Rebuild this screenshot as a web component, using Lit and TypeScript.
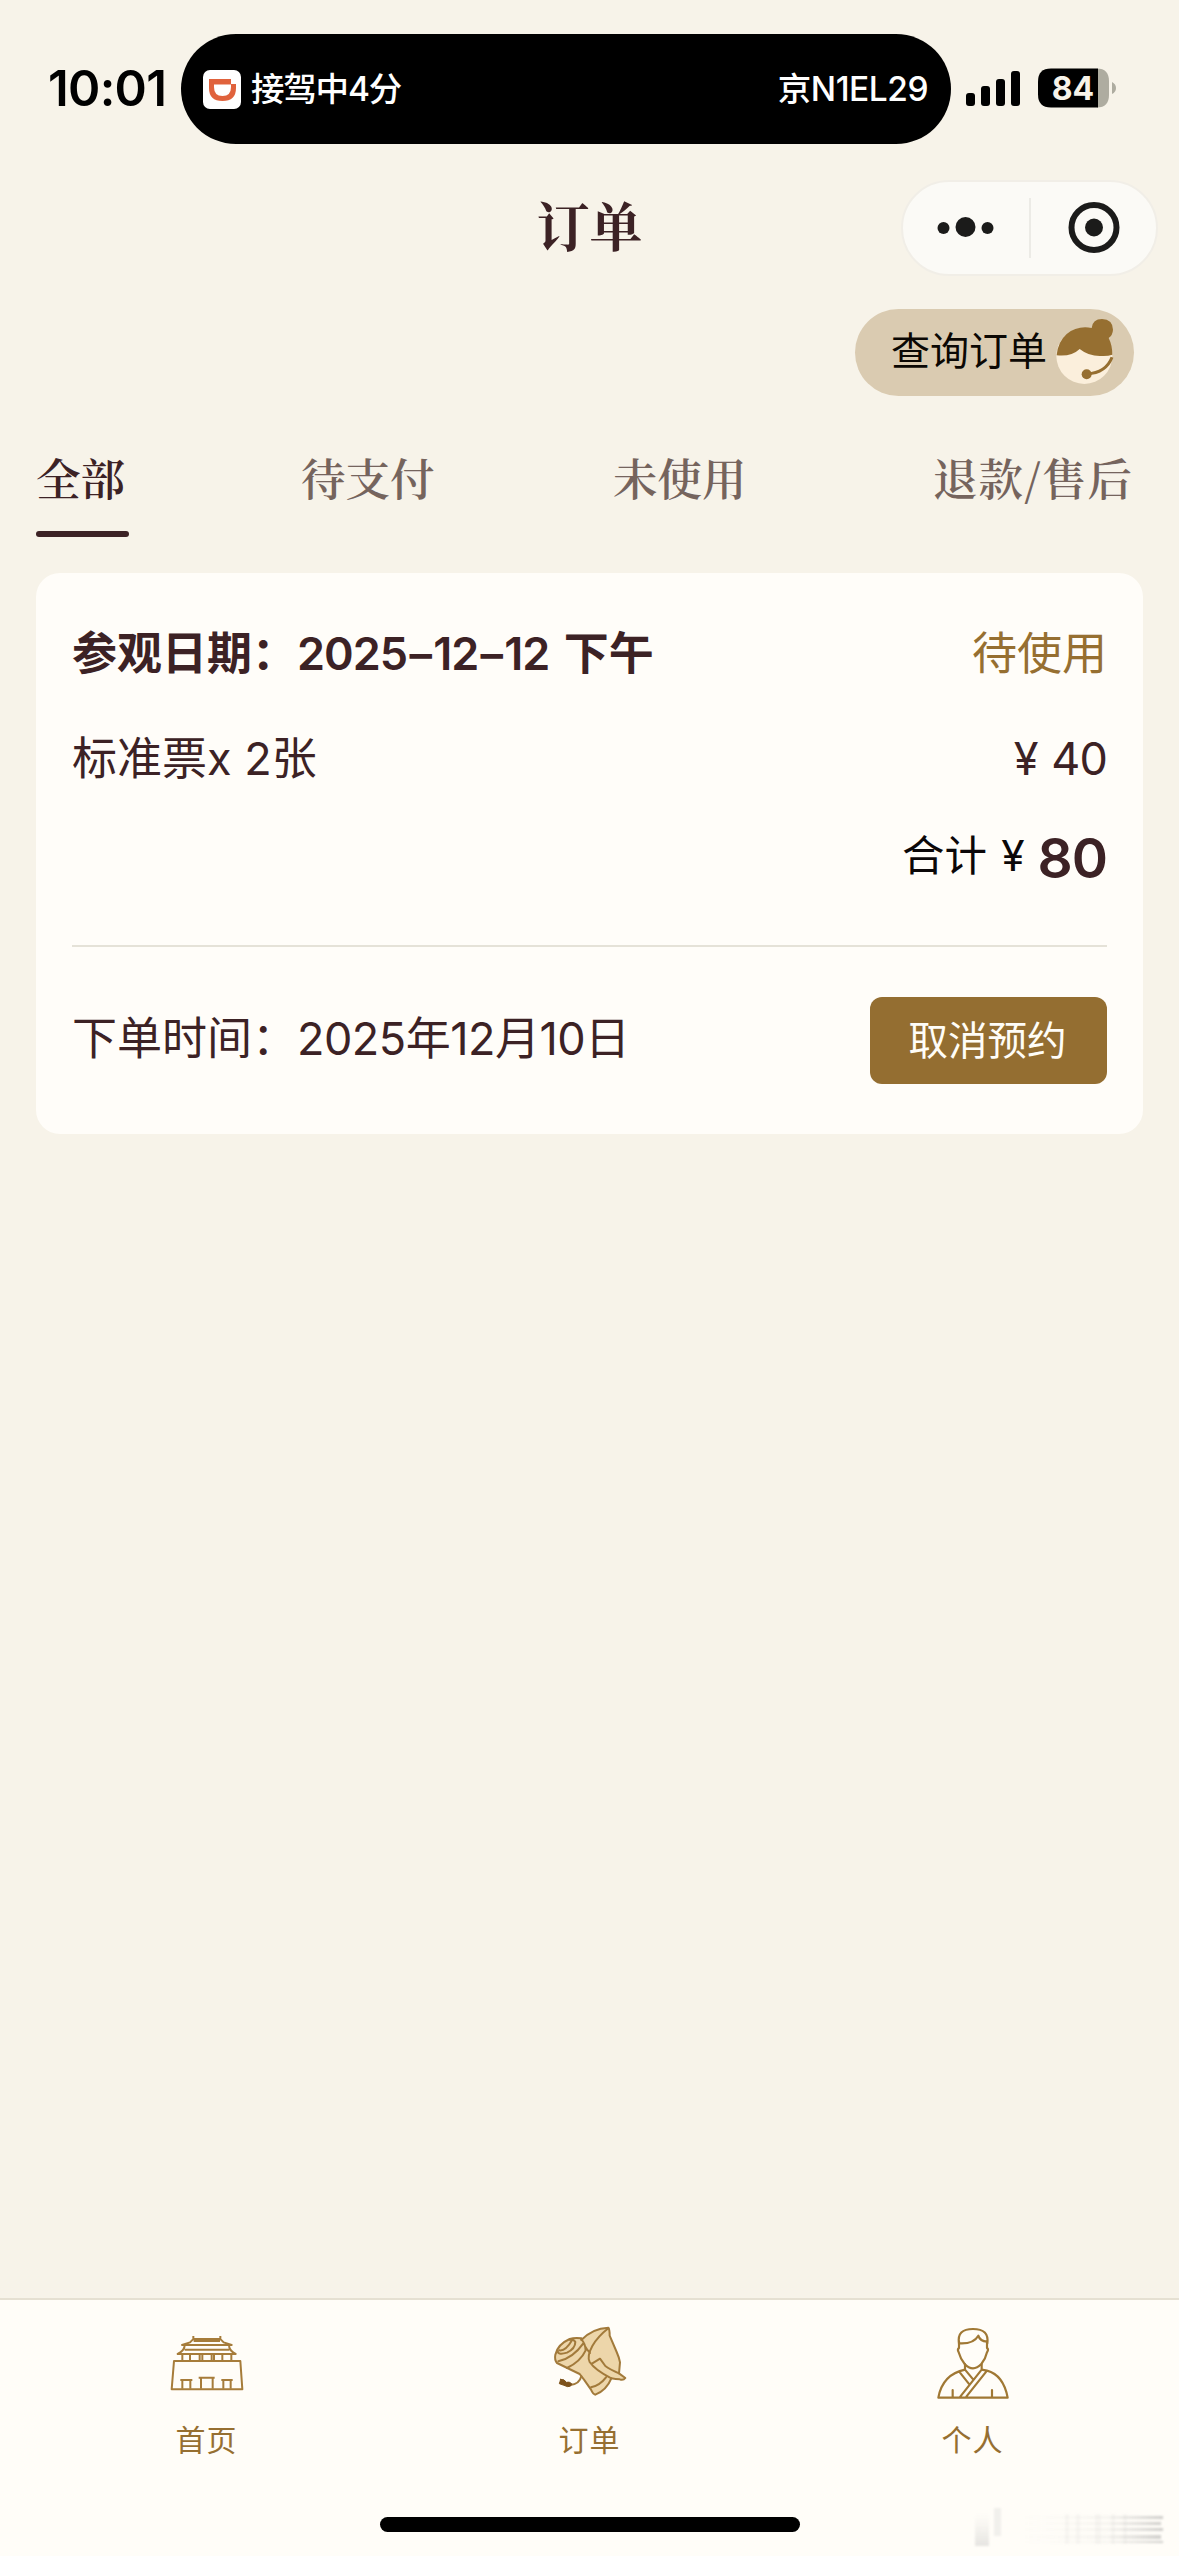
import { LitElement, html, css, svg } from "lit";
import { customElement } from "lit/decorators.js";

const homeIcon = svg`
  <svg class="tab-icon" viewBox="59 105 225 225" fill="none" stroke="#a67c3a" stroke-width="6" stroke-linejoin="round">
    <path d="M132 138v9h81v-9M134 145L122 157 98 165H247L223 157 211 145M133 153H212"/>
    <path d="M106 168q-2 14-21 24H259q-18-9-20-24M106 179H240"/>
    <path d="M99 194v18M122 194v18M151 194v18M159 194v18M187 194v18M194 194v18M219 194v18M246 194v18"/>
    <path d="M74 213H273L279 298H67Z"/>
    <path d="M93 270H129M99 270v26M123 270v26M148 263H196M155 263v33M190 263v33M216 270H250M222 270v26M244 270v26"/>
  </svg>`;

const orderIcon = svg`
  <svg class="tab-icon" viewBox="67 105 225 225" fill="#edd6aa" stroke="#a27a3b" stroke-width="6" stroke-linejoin="round" stroke-linecap="round">
    <path d="M155 150Q188 115 236 113Q240 118 240 137L261 186Q269 204 271 217L268 250L287 264Q281 272 270 268Q258 268 245 265Q231 300 197 314Q190 313 184 299L163 269L150 252L82 219Q74 210 77 194Q84 163 120 147Q136 142 155 145Z"/>
    <path fill="none" d="M236 115Q205 139 188 168Q171 199 180 216Q196 240 245 265M188 220L211 206L227 228Q240 238 268 250M155 148Q167 160 168 181Q153 214 112 234M86 214Q130 204 161 160M181 189Q171 178 167 170M184 292Q211 286 229 262"/>
    <path fill="none" d="M84 184Q86 196 112 188Q137 176 137 156Q132 147 120 149M89 181Q108 184 127 151"/>
    <path fill="none" d="M155 259Q149 283 122 285"/>
    <path fill="#7d521c" stroke="#7d521c" stroke-width="3" d="M93 268Q105 267 110 277Q119 274 126 281Q125 291 114 290Q103 286 89 281Q91 275 93 268Z"/>
  </svg>`;

const personIcon = svg`
  <svg class="tab-icon" viewBox="62 105 225 225" fill="none" stroke="#a07834" stroke-width="6.500" stroke-linejoin="round" stroke-linecap="round">
    <path d="M134 160Q127 117 176 117Q225 117 219 160"/>
    <path d="M134 160Q177 163 192 137Q197 154 218 155"/>
    <path d="M134 154V174Q128 178 133 187Q138 206 151 222Q163 235 176 235Q188 235 201 222Q214 206 218 187Q224 178 218 174V154"/>
    <path d="M152 222V239L177 269M202 222V239L136 322M152 239Q85 253 72 323H280Q267 255 218 242L202 239M137 248L165 283M218 242L156 320M115 300v20M233 300v20"/>
  </svg>`;

const serviceIcon = svg`
  <svg class="service-icon" viewBox="648 66 174 201">
    <circle cx="733" cy="180" r="84" fill="#fbefdc"/>
    <path fill="#966f31" d="M650 178Q653 138 680 114Q712 88 755 96Q758 69 786 69Q818 70 819 101Q818 118 806 126Q817 148 817 176Q803 181 785 180Q748 182 719 159Q694 183 650 178Z"/>
    <path fill="none" stroke="#966f31" stroke-width="9" d="M816 184Q798 231 741 234"/>
    <circle cx="740" cy="235" r="15" fill="#966f31"/>
  </svg>`;

@customElement("app-root")
export class AppRoot extends LitElement {
  static styles = css`
    :host {
      display: flex;
      flex-direction: column;
      width: 1179px;
      height: 2556px;
      background: #f7f3e9;
      color: #3c2225;
      font-family: Inter, "Noto Sans CJK SC", sans-serif;
      font-size: 45px;
      overflow: hidden;
      white-space: nowrap;
    }
    * { box-sizing: border-box; }
    svg { display: block; flex: none; }
    .status {
      display: flex;
      align-items: center;
      height: 178px;
      flex: none;
      color: #000;
    }
    .time {
      width: 181px;
      padding-left: 48px;
      font-size: 49px;
      font-weight: 600;
      letter-spacing: -0.7px;
      line-height: 60px;
    }
    .island {
      width: 770px;
      height: 110px;
      border-radius: 55px;
      background: #000;
      color: #fff;
      display: flex;
      align-items: center;
      padding: 0 23px 0 22px;
      font-size: 33.5px;
      font-weight: 500;
      line-height: 48px;
    }
    .activity { margin-left: 10px; letter-spacing: -1.2px; }
    .plate { margin-left: auto; letter-spacing: -0.5px; }
    .signal { margin-left: 15px; }
    .battery { margin-left: 18px; }
    .nav {
      display: grid;
      grid-template-columns: 1fr auto 1fr;
      align-items: center;
      height: 100px;
      padding: 0 21px;
      flex: none;
    }
    .serif { font-family: "Noto Serif CJK SC", "Source Han Serif SC", "Noto Sans CJK SC", serif; }
    .title {
      grid-column: 2;
      font-size: 53px;
      font-weight: 700;
      line-height: 80px;
      padding-bottom: 8px;
    }
    .capsule {
      justify-self: end;
      width: 257px;
      height: 96px;
      border-radius: 48px;
      border: 2px solid #f1eee7;
      background: #fbfaf6;
      display: flex;
    }
    .query-row {
      display: flex;
      justify-content: flex-end;
      padding: 31px 45px 0 0;
      flex: none;
    }
    .query {
      width: 279px;
      height: 87px;
      border-radius: 44px;
      background: #dacbb1;
      color: #0b0804;
      font-size: 39px;
      line-height: 56px;
      display: flex;
      align-items: center;
      justify-content: space-between;
      padding: 0 20px 3px 36px;
    }
    .service-icon { width: 58px; height: 67px; }
    .tabs {
      display: grid;
      grid-template-columns: 265px 312px 320px auto;
      padding: 43px 0 0 36px;
      height: 141px;
      flex: none;
      margin-bottom: 36px;
      font-size: 44.5px;
      font-weight: 600;
      line-height: 76px;
      color: #75645d;
    }
    .tab {
      display: flex;
      flex-direction: column;
      justify-content: space-between;
    }
    .tab.wide { letter-spacing: 1px; }
    .tab.active { color: #3c2225; width: 93px; }
    .underline { height: 6px; border-radius: 3px; background: #3c2225; }
    .card {
      margin: 0 36px;
      height: 561px;
      flex: none;
      border-radius: 24px;
      background: #fffdf9;
      padding: 28px 36px 0;
    }
    .row {
      display: flex;
      justify-content: space-between;
      align-items: center;
      line-height: 66px;
      height: 105px;
    }
    .visit { font-weight: 600; }
    .state { color: #966f31; font-weight: 400; }
    .date { letter-spacing: -1px; word-spacing: 4px; }
    .dash { margin: 0 2.300px; }
    .placed-date { letter-spacing: -0.5px; }
    .price { word-spacing: 2px; letter-spacing: -0.9px; }
    .total {
      display: flex;
      justify-content: flex-end;
      align-items: center;
      height: 134px;
      color: #0b0708;
      font-size: 42.5px;
      line-height: 66px;
      padding-bottom: 45px;
    }
    .yen { margin-left: 14px; }
    .amount { color: #3c2225; font-size: 55px; font-weight: 600; margin-left: 13px; letter-spacing: -1px; padding-top: 4px; }
    .divider { height: 2px; background: #e5e2d8; }
    .cancel {
      width: 237px;
      height: 87px;
      border-radius: 12px;
      background: #946e31;
      color: #fffdf7;
      font-size: 39.5px;
      display: flex;
      align-items: center;
      justify-content: center;
      padding-right: 2px;
    }
    .placed { margin-top: 50px; height: 87px; }
    .placed > span { padding-bottom: 4px; }
    .tabbar {
      margin-top: auto;
      height: 258px;
      flex: none;
      border-top: 2px solid #e5e0d2;
      background: #fffdf8;
      display: grid;
      grid-template-columns: repeat(3, 383px);
      justify-content: center;
      grid-template-rows: 217px 15px;
      position: relative;
    }
    .item {
      display: flex;
      flex-direction: column;
      align-items: center;
      padding-top: 25px;
      color: #966f31;
      font-size: 30px;
      line-height: 44px;
      letter-spacing: 1px;
    }
    .tab-icon { width: 75px; height: 75px; margin-bottom: 18px; }
    .indicator {
      grid-column: 1 / 4;
      justify-self: center;
      width: 420px;
      height: 15px;
      border-radius: 8px;
      background: #000;
    }
    .smudge { position: absolute; right: 10px; bottom: 8px; }
  `;

  render() {
    return html`
      <div class="status">
        <div class="time">10:01</div>
        <div class="island">
          <svg width="38" height="39" viewBox="0 0 38 39">
            <rect width="38" height="39" rx="7" fill="#fff"/>
            <path fill="#e0623c" d="M6 9H28V14H33V18Q33 31 19.500 31Q6 31 6 18Z"/>
            <path fill="#fff" d="M11 14.500H28V17Q28 26 19.500 26Q11 26 11 17Z"/>
          </svg>
          <span class="activity">接驾中4分</span>
          <span class="plate">京N1EL29</span>
        </div>
        <svg class="signal" width="54" height="36" viewBox="0 0 54 36">
          <rect x="0" y="22" width="9" height="13" rx="3"/>
          <rect x="15" y="15" width="9" height="20" rx="3"/>
          <rect x="30" y="8" width="9" height="27" rx="3"/>
          <rect x="45" y="0" width="9" height="35" rx="3"/>
        </svg>
        <svg class="battery" width="80" height="42" viewBox="0 0 80 42">
          <path fill="#aeaca0" d="M60 0.500h-1C67 0.500 71 5 71 13v14c0 8-4 12.500-12 12.500zM74 14q4 2 4 6t-4 6z"/>
          <path d="M13 0.500H60V39.500H13Q0 39.500 0 26.500V13.500Q0 0.500 13 0.500Z"/>
          <text x="35" y="31.500" text-anchor="middle" font-family="Inter, sans-serif" font-weight="700" font-size="32" fill="#f7f3e9">84</text>
        </svg>
      </div>
      <div class="nav">
        <div class="title serif">订单</div>
        <div class="capsule">
          <svg width="253" height="92" viewBox="0 0 253 92" fill="#1b1b1a">
            <circle cx="40.500" cy="46" r="6"/><circle cx="62.500" cy="45" r="10"/><circle cx="84.500" cy="46" r="6"/>
            <rect x="126.500" y="16" width="1" height="60" fill="#dedcd6"/>
            <circle cx="191" cy="45.500" r="22.500" fill="none" stroke="#1b1b1a" stroke-width="6"/>
            <circle cx="191" cy="45.500" r="9"/>
          </svg>
        </div>
      </div>
      <div class="query-row">
        <div class="query"><span>查询订单</span>${serviceIcon}</div>
      </div>
      <div class="tabs serif">
        <div class="tab active"><span>全部</span><div class="underline"></div></div>
        <div class="tab"><span>待支付</span></div>
        <div class="tab"><span>未使用</span></div>
        <div class="tab wide"><span>退款/售后</span></div>
      </div>
      <div class="card">
        <div class="row visit">
          <span>参观日期：<span class="date">2025<span class="dash">–</span>12<span class="dash">–</span>12 </span>下午</span>
          <span class="state">待使用</span>
        </div>
        <div class="row">
          <span>标准票x 2张</span>
          <span class="price">¥ 40</span>
        </div>
        <div class="total">
          <span>合计</span><span class="yen">¥</span><span class="amount">80</span>
        </div>
        <div class="divider"></div>
        <div class="row placed">
          <span>下单时间：<span class="placed-date">2025年12月10日</span></span>
          <div class="cancel">取消预约</div>
        </div>
      </div>
      <div class="tabbar">
        <div class="item">${homeIcon}<span>首页</span></div>
        <div class="item">${orderIcon}<span>订单</span></div>
        <div class="item">${personIcon}<span>个人</span></div>
        <div class="indicator"></div>
        <svg class="smudge" width="206" height="42" viewBox="0 0 206 42">
          <defs>
            <linearGradient id="fade" gradientUnits="userSpaceOnUse" x1="60" x2="200" y1="0" y2="0"><stop offset="0" stop-color="#999" stop-opacity="0"/><stop offset=".6" stop-color="#999" stop-opacity=".08"/><stop offset="1" stop-color="#888" stop-opacity=".4"/></linearGradient>
            <linearGradient id="down" x2="0" y2="1"><stop offset="0" stop-color="#bbb" stop-opacity="0"/><stop offset="1" stop-color="#aaa" stop-opacity=".3"/></linearGradient>
            <filter id="soft"><feGaussianBlur stdDeviation="1.200"/></filter>
          </defs>
          <g filter="url(#soft)">
            <rect x="12" y="8" width="14" height="32" fill="url(#down)"/>
            <rect x="31" y="2" width="7" height="28" fill="#bbb" opacity=".2"/>
            <path fill="url(#fade)" d="M60 10h140v3H60zM60 16h138v3H60zM60 22h140v3H60zM60 29h138v4H60zM60 35h140v2H60z"/>
            <path fill="#aaa" opacity=".08" d="M102 8h4v30h-4zM113 8h4v30h-4zM132 8h6v30h-6zM148 8h4v30h-4zM160 8h4v30h-4z"/>
          </g>
        </svg>
      </div>
    `;
  }
}
